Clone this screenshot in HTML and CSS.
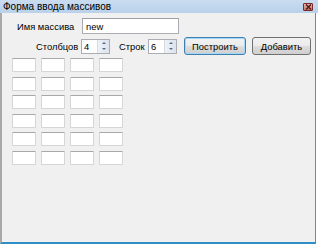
FILE: index.html
```html
<!DOCTYPE html>
<html lang="ru">
<head>
    <meta charset="UTF-8">
    <title>Форма ввода массивов</title>
    <link rel="stylesheet" href="styles.css">
</head>
<body>
    <div class="window">
        <!-- Title bar -->
        <div class="titlebar">
            <span class="title">Форма ввода массивов</span>
            <span class="close-btn">
                <svg width="7" height="6" viewBox="0 0 7 6">
                    <path d="M1 0.5 L6 5.5 M6 0.5 L1 5.5" stroke="#5a2020" stroke-width="1.6"/>
                </svg>
            </span>
        </div>

        <div class="client">
            <div class="row name-row">
                <label class="lbl name-lbl">Имя массива</label>
                <input class="textbox name-box" type="text" value="new">
            </div>

            <div class="row dims-row">
                <label class="lbl cols-lbl">Столбцов</label>
                <div class="spinner">
                    <span class="spin-val">4</span>
                    <span class="spin-btns">
                        <span class="arrow up"></span>
                        <span class="arrow down"></span>
                    </span>
                </div>
                <label class="lbl rows-lbl">Строк</label>
                <div class="spinner">
                    <span class="spin-val">6</span>
                    <span class="spin-btns">
                        <span class="arrow up"></span>
                        <span class="arrow down"></span>
                    </span>
                </div>
                <button class="btn btn-default">Построить</button>
                <button class="btn btn-add">Добавить</button>
            </div>

            <div class="cells" id="cells"></div>
        </div>
    </div>

    <script>
        // 6 rows x 4 columns of empty cells
        const cells = document.getElementById('cells');
        for (let i = 0; i < 24; i++) {
            const cell = document.createElement('div');
            cell.className = 'cell';
            cells.appendChild(cell);
        }
    </script>
</body>
</html>
```

FILE: styles.css
```css
body {
    margin: 0;
    background: #ffffff;
    font-family: 'Liberation Sans', Arial, sans-serif;
    font-size: 9.4px;
    color: #000;
}

.window {
    width: 318px;
    height: 244px;
    display: flex;
    flex-direction: column;
}

.titlebar {
    height: 13px;
    background: linear-gradient(to bottom, #cadcf0, #b9d1ea);
    display: flex;
    align-items: center;
    justify-content: space-between;
    padding: 0 5px 0 3px;
    flex-shrink: 0;
}

.title {
    font-size: 10px;
    line-height: 13px;
}

.close-btn {
    width: 8px;
    height: 6px;
    border: 1px solid #7b2a26;
    border-radius: 1px;
    background: linear-gradient(to bottom, #e9b8b0, #c8786c);
    display: flex;
    align-items: center;
    justify-content: center;
}

.close-btn svg {
    display: block;
}

.client {
    flex: 1;
    margin-right: 2px;
    background: #f0f0f0;
    border-left: 2px solid #a9a9a9;
    border-right: 1px solid #3a9bd0;
    border-bottom: 2px solid #2f8fc4;
    padding-top: 5px;
}

.row {
    display: flex;
    align-items: center;
}

.lbl {
    white-space: nowrap;
}

.name-row {
    height: 16px;
    padding-left: 15px;
}

.name-lbl {
    width: 65px;
}

.textbox {
    box-sizing: border-box;
    height: 16px;
    border: 1px solid #abadb3;
    border-top-color: #9ea0a5;
    background: #fff;
    font-family: inherit;
    font-size: 9.4px;
    padding: 0 3px;
    margin: 0;
    outline: none;
}

.name-box {
    width: 97px;
}

.dims-row {
    height: 18px;
    margin-top: 3px;
    padding-left: 34px;
}

.cols-lbl {
    width: 45px;
}

.spinner {
    box-sizing: border-box;
    width: 29px;
    height: 15px;
    border: 1px solid #abadb3;
    background: #fff;
    display: flex;
    justify-content: space-between;
}

.spin-val {
    padding-left: 2px;
    line-height: 13px;
}

.spin-btns {
    width: 11px;
    display: flex;
    flex-direction: column;
    border-left: 1px solid #d5dae3;
    background: linear-gradient(to right, #eef2f8, #dce3ee);
}

.arrow {
    flex: 1;
    display: flex;
    align-items: center;
    justify-content: center;
}

.arrow::after {
    content: '';
    border-left: 2px solid transparent;
    border-right: 2px solid transparent;
}

.arrow.up::after {
    border-bottom: 2px solid #5a6a80;
}

.arrow.down::after {
    border-top: 2px solid #5a6a80;
}

.rows-lbl {
    width: 29px;
    margin-left: 9px;
}

.btn {
    box-sizing: border-box;
    height: 18px;
    padding: 0;
    border: 1px solid #707070;
    border-radius: 3px;
    background: linear-gradient(to bottom, #f2f2f2 0%, #ebebeb 50%, #dddddd 51%, #cfcfcf 100%);
    font-family: inherit;
    font-size: 9.4px;
    color: #000;
}

.btn-default {
    width: 62px;
    margin-left: 7px;
    border-color: #3c7fb1;
    box-shadow: inset 0 0 0 1px #a6d7f3;
}

.btn-add {
    width: 59px;
    margin-left: 6px;
}

.cells {
    display: grid;
    grid-template-columns: repeat(4, 24px);
    grid-auto-rows: 14px;
    column-gap: 5px;
    row-gap: 4.6px;
    margin: 3px 0 0 10px;
}

.cell {
    background: #fff;
    border: 1px solid #d6d6d6;
    border-top-color: #a8a8a8;
    border-radius: 1px;
}
```
